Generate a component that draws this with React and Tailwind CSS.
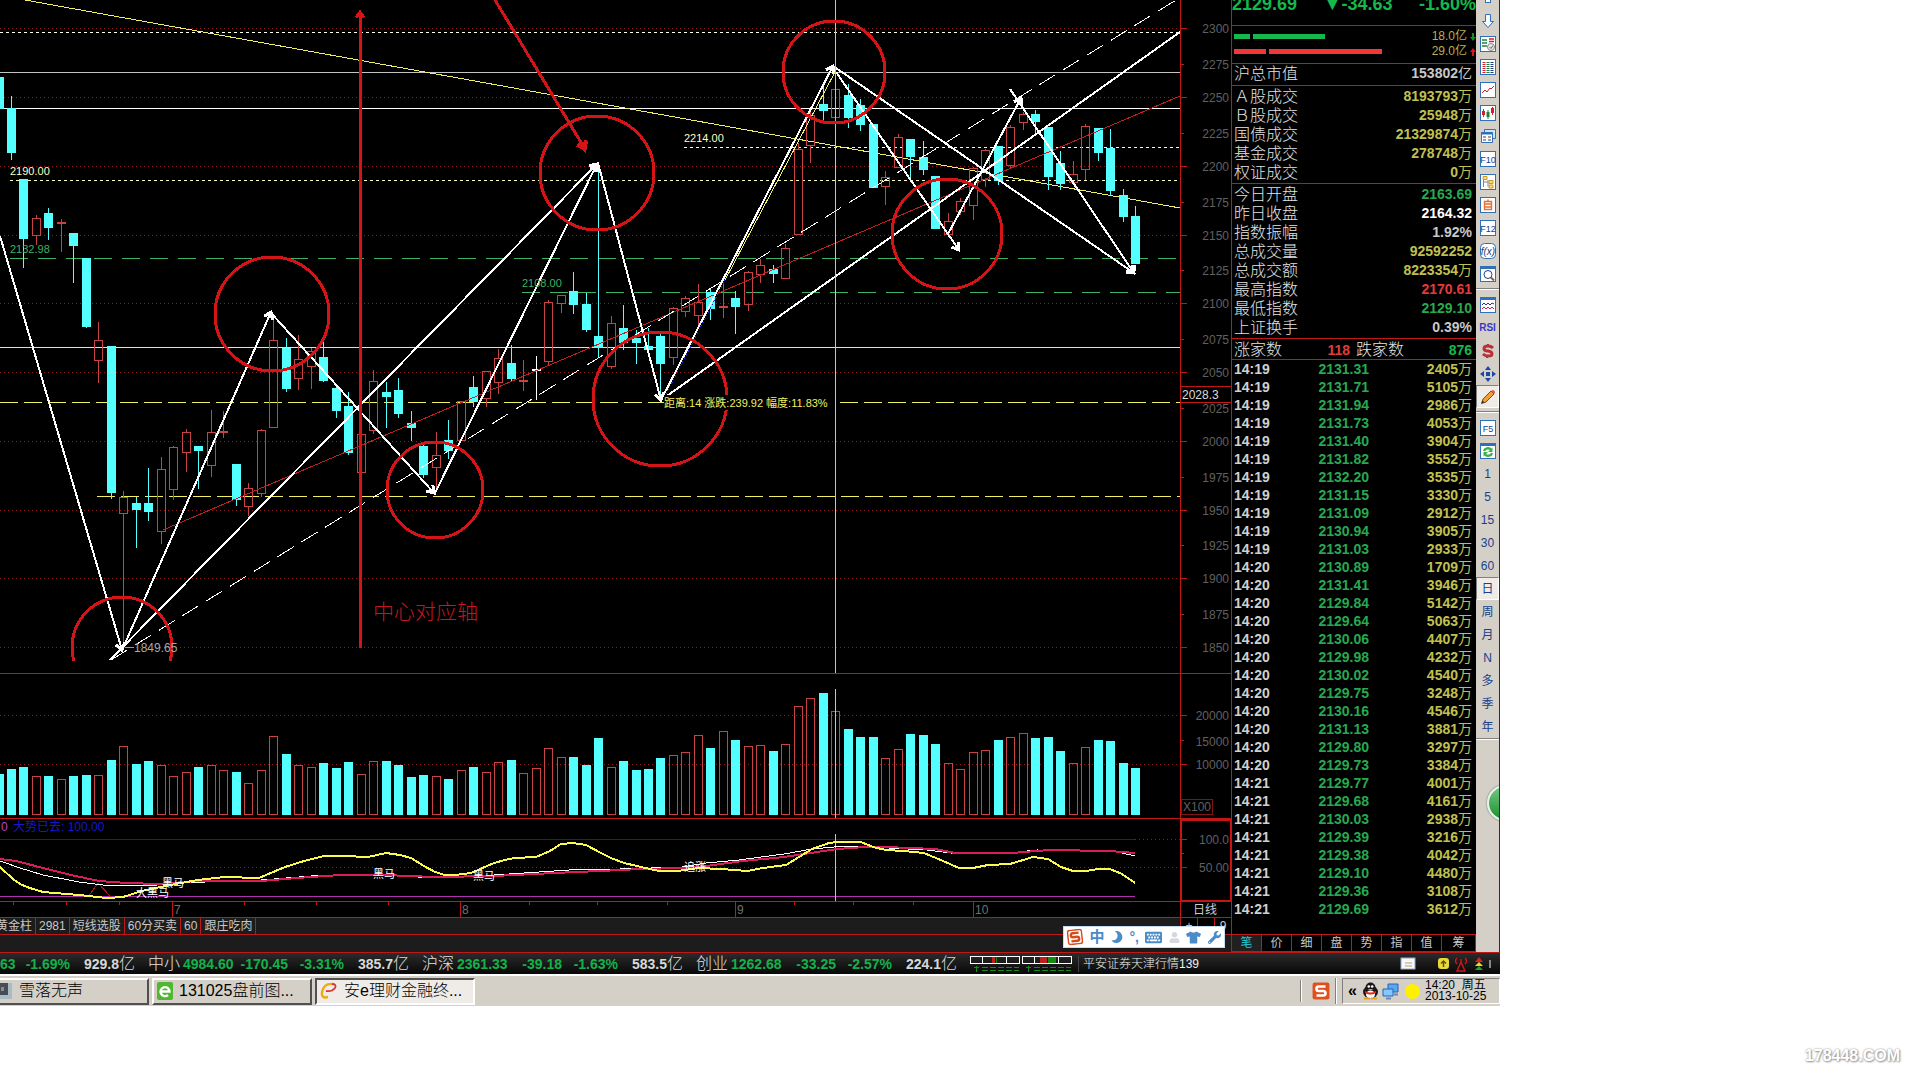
import { clsx } from 'clsx';
import { FaKeyboard, FaMoon, FaTshirt, FaUser, FaWrench } from 'react-icons/fa';

const CHART_W = 1232;
const PLOT_W = 1180;
const STEP = 12.49;
const CYAN = '#54ffff';
const RED = '#c84444';
const FRAME = '#c01818';
const MARK = '#d41416';

const barX = (i) => Math.round(11 + (i - 1) * STEP);

// [direction, high, body top, body bottom, low, volume height]
const candles = [
  ['d', 77, 77, 108, 108, 41], ['d', 96, 108, 152, 160, 46], ['d', 179, 179, 238, 268, 48],
  ['u', 215, 218, 235, 245, 39], ['d', 208, 213, 227, 240, 39], ['u', 219, 222, 223, 252, 36],
  ['d', 233, 233, 245, 283, 39], ['d', 258, 258, 326, 328, 40], ['u', 322, 340, 360, 383, 40],
  ['d', 346, 346, 492, 499, 55], ['u', 491, 497, 513, 645, 69], ['d', 497, 503, 509, 548, 51],
  ['d', 468, 503, 511, 521, 54], ['u', 457, 469, 531, 544, 50], ['u', 446, 447, 489, 500, 39],
  ['u', 429, 432, 452, 472, 43], ['d', 446, 446, 450, 489, 48], ['u', 410, 432, 465, 477, 50],
  ['u', 411, 431, 432, 438, 45], ['d', 464, 464, 499, 506, 43], ['u', 483, 488, 506, 516, 32],
  ['u', 429, 430, 493, 497, 45], ['u', 318, 340, 427, 428, 79], ['d', 338, 348, 388, 392, 61],
  ['u', 335, 359, 378, 390, 50], ['u', 348, 351, 366, 389, 48], ['d', 340, 357, 380, 382, 52],
  ['d', 385, 388, 410, 418, 47], ['d', 392, 406, 452, 455, 53], ['u', 434, 434, 472, 472, 41],
  ['u', 370, 381, 430, 434, 54], ['d', 382, 392, 396, 428, 54], ['d', 378, 390, 413, 418, 50],
  ['d', 411, 423, 427, 441, 38], ['d', 445, 446, 474, 478, 40], ['u', 432, 455, 467, 490, 39],
  ['d', 420, 440, 450, 459, 36], ['u', 401, 401, 440, 440, 45], ['d', 376, 387, 401, 407, 48],
  ['u', 371, 371, 398, 407, 43], ['u', 349, 358, 382, 394, 53], ['d', 345, 363, 378, 381, 55],
  ['u', 360, 380, 381, 391, 42], ['w', 356, 369, 370, 400, 47], ['u', 300, 302, 361, 365, 67],
  ['u', 295, 295, 303, 313, 58], ['d', 272, 291, 304, 314, 58], ['d', 293, 304, 329, 332, 50],
  ['d', 163, 336, 347, 357, 77], ['u', 316, 323, 366, 369, 48], ['d', 305, 328, 342, 350, 54],
  ['d', 330, 338, 342, 364, 45], ['d', 328, 346, 349, 351, 46], ['d', 333, 336, 363, 401, 57],
  ['u', 307, 308, 357, 365, 60], ['u', 296, 298, 311, 317, 63], ['u', 284, 302, 315, 327, 80],
  ['d', 288, 292, 308, 320, 67], ['u', 284, 306, 307, 318, 84], ['d', 291, 298, 306, 334, 75],
  ['u', 271, 272, 304, 311, 69], ['u', 259, 265, 274, 283, 70], ['d', 265, 269, 273, 283, 64],
  ['u', 244, 248, 278, 278, 71], ['u', 143, 149, 234, 235, 109], ['u', 112, 115, 145, 163, 117],
  ['d', 85, 104, 110, 121, 122], ['u', 73, 89, 117, 117, 104], ['d', 84, 95, 117, 128, 86],
  ['d', 99, 105, 124, 131, 78], ['d', 124, 124, 187, 188, 78], ['u', 171, 177, 186, 205, 57],
  ['u', 134, 137, 167, 168, 66], ['d', 139, 139, 156, 181, 81], ['d', 141, 157, 169, 175, 80],
  ['d', 176, 176, 228, 229, 71], ['u', 213, 221, 234, 236, 52], ['u', 198, 201, 211, 215, 46],
  ['u', 167, 168, 205, 220, 63], ['u', 149, 150, 179, 187, 65], ['d', 146, 146, 180, 185, 75],
  ['u', 125, 127, 165, 168, 78], ['u', 112, 114, 122, 130, 82], ['d', 110, 114, 121, 134, 77],
  ['d', 127, 127, 176, 190, 78], ['d', 151, 163, 183, 190, 64], ['u', 161, 174, 182, 184, 52],
  ['u', 124, 126, 169, 180, 68], ['d', 128, 128, 152, 161, 75], ['d', 129, 148, 190, 196, 74],
  ['d', 189, 195, 216, 222, 52], ['d', 206, 216, 263, 263, 47],
];

const priceTicks = [
  [2300, 28], [2275, 64], [2250, 97], [2225, 133], [2200, 166], [2175, 202], [2150, 235],
  [2125, 270], [2100, 303], [2075, 339], [2050, 372], [2025, 408], [2000, 441], [1975, 477],
  [1950, 510], [1925, 545], [1900, 578], [1875, 614], [1850, 647],
];

const levels = [
  { y: 32, x: 0, color: '#fffff0', dash: '3 3' },
  { y: 72, x: 0, color: '#c4c4c4' },
  { y: 108, x: 0, color: '#ffffff' },
  { y: 147, x: 684, color: '#ffffc0', dash: '3 3', label: '2214.00' },
  { y: 180, x: 10, color: '#ffffc0', dash: '3 3', label: '2190.00' },
  { y: 258, x: 10, color: '#3cb464', dash: '18 10', label: '2132.98' },
  { y: 292, x: 522, color: '#3cb464', dash: '18 10', label: '2108.00' },
  { y: 347, x: 0, color: '#f0f060' },
  { y: 402, x: 0, color: '#f0f060', dash: '18 6' },
  { y: 496, x: 97, color: '#f0f060', dash: '18 6' },
];

const swings = [
  [0, 236, 122, 650], [123, 648, 271, 312], [110, 660, 597, 164], [272, 314, 434, 493],
  [435, 493, 597, 164], [598, 163, 661, 400], [661, 400, 833, 66], [836, 68, 1134, 273],
  [836, 72, 959, 250], [948, 234, 1021, 98], [1010, 89, 1134, 273],
];

const circles = [
  [272, 314, 57], [597, 173, 57], [834, 72, 51], [947, 234, 55], [435, 490, 48], [660, 399, 67],
];

const trades = [
  ['14:19', '2131.31', 2405], ['14:19', '2131.71', 5105], ['14:19', '2131.94', 2986],
  ['14:19', '2131.73', 4053], ['14:19', '2131.40', 3904], ['14:19', '2131.82', 3552],
  ['14:19', '2132.20', 3535], ['14:19', '2131.15', 3330], ['14:19', '2131.09', 2912],
  ['14:19', '2130.94', 3905], ['14:19', '2131.03', 2933], ['14:20', '2130.89', 1709],
  ['14:20', '2131.41', 3946], ['14:20', '2129.84', 5142], ['14:20', '2129.64', 5063],
  ['14:20', '2130.06', 4407], ['14:20', '2129.98', 4232], ['14:20', '2130.02', 4540],
  ['14:20', '2129.75', 3248], ['14:20', '2130.16', 4546], ['14:20', '2131.13', 3881],
  ['14:20', '2129.80', 3297], ['14:20', '2129.73', 3384], ['14:21', '2129.77', 4001],
  ['14:21', '2129.68', 4161], ['14:21', '2130.03', 2938], ['14:21', '2129.39', 3216],
  ['14:21', '2129.38', 4042], ['14:21', '2129.10', 4480], ['14:21', '2129.36', 3108],
  ['14:21', '2129.69', 3612],
];

const turnover = [
  ['Ａ股成交', '8193793', '万'], ['Ｂ股成交', '25948', '万'], ['国债成交', '21329874', '万'],
  ['基金成交', '278748', '万'], ['权证成交', '0', '万'],
];

const indexStats = [
  ['今日开盘', '2163.69', '', 'text-[#28a850]'],
  ['昨日收盘', '2164.32', '', 'text-white'],
  ['指数振幅', '1.92%', '', 'text-[#c8c8c8]'],
  ['总成交量', '92592252', '', 'text-[#c0c050]'],
  ['总成交额', '8223354', '万', 'text-[#c0c050]'],
  ['最高指数', '2170.61', '', 'text-[#e03c3c]'],
  ['最低指数', '2129.10', '', 'text-[#28a850]'],
  ['上证换手', '0.39%', '', 'text-[#c8c8c8]'],
];

const quotes = [
  { change: '63', percent: '-1.69%', amount: '929.8' },
  { name: '中小', price: '4984.60', change: '-170.45', percent: '-3.31%', amount: '385.7' },
  { name: '沪深', price: '2361.33', change: '-39.18', percent: '-1.63%', amount: '583.5' },
  { name: '创业', price: '1262.68', change: '-33.25', percent: '-2.57%', amount: '224.1' },
];

function GridRow({ y }) {
  return <line x1="0" x2={PLOT_W} y1={y + 0.5} y2={y + 0.5} stroke="#8c1c1c" strokeDasharray="1 3" />;
}

function Arrow({ x1, y1, x2, y2, width = 2, color = '#fff', head = 8 }) {
  const a = Math.atan2(y2 - y1, x2 - x1);
  const wing = (d) => `${x2 - head * Math.cos(a + d)},${y2 - head * Math.sin(a + d)}`;
  return (
    <g stroke={color} strokeWidth={width} fill="none">
      <line x1={x1} y1={y1} x2={x2} y2={y2} />
      <polyline points={`${wing(0.6)} ${x2},${y2} ${wing(-0.6)}`} strokeWidth={3} />
    </g>
  );
}

function Candle({ i, data }) {
  const [dir, high, top, bottom, low] = data;
  const x = barX(i);
  const color = dir === 'd' ? CYAN : dir === 'w' ? '#fff' : RED;
  const hollow = dir === 'u' && bottom - top > 2;
  return (
    <g>
      <rect x={x} y={high} width="1" height={Math.max(top - high, 0)} fill={color} />
      <rect x={x} y={bottom} width="1" height={Math.max(low - bottom, 0)} fill={color} />
      {hollow ? (
        <rect x={x - 3.5} y={top + 0.5} width="8" height={bottom - top} fill="none" stroke={color} />
      ) : (
        <rect x={x - 4} y={top} width="9" height={bottom - top + 1} fill={color} />
      )}
    </g>
  );
}

function PriceChart() {
  return (
    <svg viewBox={`0 0 ${CHART_W} 673`} className="block w-full h-auto" shapeRendering="crispEdges" fontSize="12">
      {priceTicks.map(([price, y], i) => (
        <g key={price}>
          {i % 2 === 0 && <GridRow y={y} />}
          <line x1="1180" x2={i % 2 ? 1184 : 1187} y1={y + 0.5} y2={y + 0.5} stroke={FRAME} />
          <text x="1229" y={y + 5} fill="#606060" textAnchor="end">{price}</text>
        </g>
      ))}
      {levels.map(({ y, x, color, dash }) => (
        <line key={y} x1={x} x2={PLOT_W} y1={y + 0.5} y2={y + 0.5} stroke={color} strokeDasharray={dash} />
      ))}
      <line x1="25" y1="0" x2="1180" y2="208" stroke="#f0f060" />
      {candles.map((c, i) => <Candle key={i} i={i} data={c} />)}
      <line x1="163" y1="530" x2="1180" y2="96" stroke="#c02020" />
      <line x1="111" y1="660" x2="1176" y2="0" stroke="#fff" strokeDasharray="19 9" />
      <line x1="664" y1="398" x2="1180" y2="32" stroke="#fff" strokeWidth="2" />
      {swings.map(([x1, y1, x2, y2]) => (
        <Arrow key={`${x1}-${x2}`} x1={x1} y1={y1} x2={x2} y2={y2} />
      ))}
      <line x1="725" y1="280" x2="835" y2="72" stroke="#f0f060" />
      <line x1="664" y1="398" x2="725" y2="280" stroke="#2828d0" strokeDasharray="2 2" />
      <line x1="835.5" x2="835.5" y1="0" y2="673" stroke="#c4c4c4" />
      {levels.filter((l) => l.label).map(({ x, y, color, label }) => (
        <text key={label} x={x} y={y - 5} fill={color} fontSize="11">{label}</text>
      ))}
      <g>
        <Arrow x1={360} y1={648} x2={360} y2={12} width={3} color={MARK} head={7} />
        <Arrow x1={495} y1={0} x2={585} y2={149} width={3} color={MARK} head={9} />
        <path d="M576 144L588 141L586 153Z" fill={MARK} />
        {circles.map(([cx, cy, r]) => (
          <circle key={cx} cx={cx} cy={cy} r={r} fill="none" stroke={MARK} strokeWidth="3" />
        ))}
        <path d="M74 661A50 50 0 1 1 170 661" fill="none" stroke={MARK} strokeWidth="3" />
      </g>
      <path d="M125 647.5H134" stroke="#999" />
      <text x="134" y="652" fill="#a8a8a8">1849.65</text>
      <text x="373" y="619" fill="#c01822" fontSize="21" className="font-light">中心对应轴</text>
      <rect x="664" y="395" width="170" height="15" fill="#000" />
      <text x="664" y="407" fill="#f0f060" fontSize="11">距离:14 涨跌:239.92 幅度:11.83%</text>
      <path d="M1180.5 0V673M1231.5 0V673M1180 386.5H1232M1180 402.5H1232" stroke={FRAME} fill="none" />
      <rect x="1181" y="387" width="50" height="15" fill="#000" />
      <text x="1182" y="399" fill="#ddd">2028.3</text>
    </svg>
  );
}

function VolumeChart() {
  return (
    <svg viewBox={`0 673 ${CHART_W} 146`} className="block w-full h-auto" shapeRendering="crispEdges" fontSize="12">
      <GridRow y={715} />
      <GridRow y={764} />
      {candles.map((c, i) => {
        const x = barX(i);
        return c[0] === 'd' ? (
          <rect key={i} x={x - 4} y={815 - c[5]} width="9" height={c[5]} fill={CYAN} />
        ) : (
          <rect key={i} x={x - 3.5} y={815.5 - c[5]} width="8" height={c[5] - 1} fill="none" stroke={RED} />
        );
      })}
      <line x1="835.5" x2="835.5" y1="689" y2="819" stroke="#c4c4c4" />
      <path d="M0 673.5H1232M1180.5 673V819M1231.5 673V819M0 818.5H1232M1180 715.5H1187M1180 740.5H1184M1180 764.5H1187" stroke={FRAME} fill="none" />
      <g fill="#606060" textAnchor="end">
        <text x="1229" y="720">20000</text>
        <text x="1229" y="746">15000</text>
        <text x="1229" y="769">10000</text>
        <text x="1211" y="811">X100</text>
      </g>
      <rect x="1181.5" y="799.5" width="31" height="15" fill="none" stroke="#801414" />
    </svg>
  );
}

function IndicatorChart() {
  return (
    <svg viewBox={`0 819 ${CHART_W} 83`} className="block w-full h-auto" shapeRendering="crispEdges" fontSize="12">
      <GridRow y={867} />
      <line x1="1135" x2="1180" y1="839.5" y2="839.5" stroke="#8c1c1c" strokeDasharray="1 3" />
      <line x1="0" x2="1135" y1="839.5" y2="839.5" stroke="#1818b0" />
      <line x1="0" x2="1135" y1="896.5" y2="896.5" stroke="#b030b0" />
      <line x1="835.5" x2="835.5" y1="834" y2="902" stroke="#c4c4c4" />
      <path d="M88 897L98 883L111 897" fill="none" stroke="#b01818" />
      <polyline
        fill="none" stroke="#fff"
        points="0,861 20,868 43,875 79,882 111,886 158,885 178,883 261,880 324,875 384,875 435,878 494,875 569,870 620,869 682,867 706,863 739,860 784,854 812,849 845,846 869,847 927,850 959,854 1008,853 1037,850 1110,851 1122,853 1135,856"
      />
      <polyline
        fill="none" stroke="#d81e5a" strokeWidth="2"
        points="0,859 16,861 47,869 71,875 99,881 127,883 158,884 198,881 261,881 297,878 340,875 384,875 435,877 494,876 554,873 600,871 641,869 682,868 706,866 743,861 784,857 837,849 865,847 886,847 935,849 955,853 1012,853 1049,850 1110,851 1135,853"
      />
      <polyline
        fill="none" stroke="#fafa50" strokeWidth="2"
        points="0,867 14,880 22,885 30,888 43,892 79,895 107,898 123,897 142,891 170,885 198,880 225,877 259,878 285,867 304,861 324,856 344,856 368,857 386,853 400,855 411,858 424,866 435,872 445,875 455,875 471,873 494,863 505,860 514,858 536,857 550,851 561,844 573,843 586,845 601,853 611,858 624,863 641,867 659,871 678,871 698,868 722,869 747,871 763,868 786,865 799,857 812,849 829,843 837,842 861,842 873,847 886,850 904,851 924,853 943,861 959,868 973,868 988,865 1010,864 1033,857 1048,859 1061,867 1073,871 1086,871 1098,869 1110,869 1122,874 1135,883"
      />
      <g fill="#fff" fontSize="11">
        <text x="162" y="887">黑马</text>
        <text x="136" y="897">大黑马</text>
        <text x="373" y="878">黑马</text>
        <text x="473" y="880">黑马</text>
        <text x="684" y="871">追涨</text>
      </g>
      <text x="1" y="831" fill="#c040c0">0</text>
      <text x="13" y="831" fill="#1818c8">大势已去: 100.00</text>
      <path d="M0 901.5H1180M1180 839.5H1187M1180 853.5H1184M1180 867.5H1187" stroke={FRAME} />
      <rect x="1181" y="820" width="50" height="81" strokeWidth="2" stroke="#c81414" fill="none" />
      <g fill="#606060" textAnchor="end">
        <text x="1229" y="844">100.0</text>
        <text x="1229" y="872">50.00</text>
      </g>
    </svg>
  );
}

function TimeAxis() {
  const minor = [13, 66, 119, 244, 316, 388, 529, 597, 667, 794, 853, 913];
  const months = [[172, 7], [460, 8], [735, 9], [973, 10]];
  return (
    <svg viewBox={`0 902 ${CHART_W} 16`} className="block w-full h-auto" shapeRendering="crispEdges" fontSize="12">
      {minor.map((x) => <line key={x} x1={x + 0.5} x2={x + 0.5} y1="902" y2="905" stroke={FRAME} />)}
      {months.map(([x, label]) => (
        <g key={x}>
          <line x1={x + 0.5} x2={x + 0.5} y1="902" y2="918" stroke={FRAME} />
          <text x={x + 2} y="914" fill="#707070">{label}</text>
        </g>
      ))}
      <path d="M0 917.5H1232M1180.5 902V918M1231.5 902V918" stroke={FRAME} />
      <text x="1205" y="914" fill="#ccc" textAnchor="middle" fontSize="12">日线</text>
    </svg>
  );
}

function StudyTabs() {
  const tabs = ['黄金柱', '2981', '短线选股', '60分买卖', '60', '跟庄吃肉'];
  return (
    <div className="flex h-[17px] border-b border-[#c01818] bg-[#1c1c1c] text-xs text-[#c8c8c8]">
      {tabs.map((tab, i) => (
        <button key={tab} className={clsx('border-r border-[#c01818] leading-4', i === 0 ? '-ml-1 pr-[3px]' : 'px-[3px]')}>
          {tab}
        </button>
      ))}
      <div className="ml-auto grid w-[52px] grid-cols-3 border-l border-[#c01818] bg-black">
        {['+', '-', '9'].map((key) => (
          <button key={key} className="border-r border-[#c01818] leading-4">{key}</button>
        ))}
      </div>
    </div>
  );
}

function ImeBar() {
  return (
    <div className="absolute right-[7px] bottom-1 flex h-[22px] w-[162px] items-center justify-between border border-[#c8dcf0] bg-white px-[3px] text-[#4a8cc8]">
      <SogouIcon size={16} tilt />
      <span className="text-[15px] leading-5 font-bold">中</span>
      <FaMoon size={12} className="-scale-x-100" />
      <span className="text-sm leading-5 font-bold">°,</span>
      <FaKeyboard size={17} />
      <FaUser size={11} className="text-[#d4d8dc]" />
      <FaTshirt size={15} />
      <FaWrench size={13} />
    </div>
  );
}

function SogouIcon({ size, tilt }) {
  return (
    <svg width={size} height={size} viewBox="0 0 16 16" fill="none" className={clsx(tilt && '-rotate-6')}>
      {tilt ? (
        <rect x="1" y="1" width="14" height="14" rx="2" fill="#fff" stroke="#d84c1c" strokeWidth="1.5" />
      ) : (
        <rect x="0.5" y="0.5" width="15" height="15" rx="2" fill="#e0501c" />
      )}
      <path d="M12 4H6Q4 4 4 6T6 8H10Q12 8 12 10T10 12H4" stroke={tilt ? '#d84c1c' : '#fff'} strokeWidth="2.4" />
    </svg>
  );
}

function StatRow({ label, value, unit, color }) {
  return (
    <div className="flex h-[19px] items-center justify-between">
      <dt className="text-base leading-[19px] font-light text-[#e4e4e4]">{label}</dt>
      <dd className={clsx('text-sm leading-[19px] font-bold', color)}>
        {value}<span className="font-normal">{unit}</span>
      </dd>
    </div>
  );
}

function QuotePanel() {
  return (
    <aside className="flex w-[244px] shrink-0 flex-col bg-black">
      <div className="flex h-[26px] justify-between border-b border-[#c01818] text-lg leading-2 font-bold text-[#14b84c]">
        <span>2129.69</span>
        <span>▼-34.63</span>
        <span>-1.60%</span>
      </div>
      <div className="h-[38px] border-b border-[#c01818] pt-[3px] pl-[2px] text-xs leading-[15px] text-[#b8b050]">
        <div className="flex items-center gap-[3px]">
          <i className="h-[5px] w-4 bg-[#14b84c]" />
          <i className="h-[5px] w-[72px] bg-[#14b84c]" />
          <span className="ml-auto">18.0亿</span>
          <svg width="6" height="8" viewBox="0 0 6 8"><path d="M2 0H4V4H6L3 8L0 4H2Z" fill="#148c28" /></svg>
        </div>
        <div className="flex items-center gap-[3px]">
          <i className="h-[5px] w-8 bg-[#f03838]" />
          <i className="h-[5px] w-[113px] bg-[#f03838]" />
          <span className="ml-auto">29.0亿</span>
          <svg width="6" height="8" viewBox="0 0 6 8"><path d="M2 8H4V4H6L3 0L0 4H2Z" fill="#e01414" /></svg>
        </div>
      </div>
      <dl className="h-[22px] border-b border-[#c01818] pr-1 pl-[2px]">
        <StatRow label="沪总市值" value="153802" unit="亿" color="text-[#c8c8c8]" />
      </dl>
      <dl className="h-[98px] border-b border-[#c01818] pt-[1px] pr-1 pl-[2px]">
        {turnover.map(([label, value, unit]) => (
          <StatRow key={label} label={label} value={value} unit={unit} color="text-[#c0c050]" />
        ))}
      </dl>
      <dl className="h-[155px] border-b border-[#c01818] pt-[1px] pr-1 pl-[2px]">
        {indexStats.map(([label, value, unit, color]) => (
          <StatRow key={label} label={label} value={value} unit={unit} color={color} />
        ))}
      </dl>
      <div className="flex h-[21px] items-center border-b border-[#c01818] pt-[2px] pr-1 pl-[2px] text-base leading-5 font-light text-[#e4e4e4]">
        <span>涨家数</span>
        <span className="w-[68px] text-right text-sm font-bold text-[#e03c3c]">118</span>
        <span className="ml-[6px]">跌家数</span>
        <span className="ml-auto text-sm font-bold text-[#14b84c]">876</span>
      </div>
      <table className="w-full text-sm leading-[18px] font-bold">
        <tbody>
          {trades.map(([time, price, lots], i) => (
            <tr key={i} className="h-[18px]">
              <td className="w-[70px] p-0 pl-[2px] text-[#d0d0d0]">{time}</td>
              <td className="w-[67px] p-0 text-right text-[#28a850]">{price}</td>
              <td className="p-0 pr-1 text-right text-[#c0c050]">{lots}<span className="font-normal">万</span></td>
            </tr>
          ))}
        </tbody>
      </table>
      <div className="mt-auto flex h-[18px] border-t border-b border-[#c01818]">
        {['笔', '价', '细', '盘', '势', '指', '值', '筹'].map((tab, i) => (
          <button
            key={tab}
            className={clsx(
              'w-[30px] border-r border-[#c01818] text-xs leading-4 last:flex-1',
              i ? 'text-[#c8c8c8]' : 'bg-[#202020] text-[#20c8d8]',
            )}
          >
            {tab}
          </button>
        ))}
      </div>
    </aside>
  );
}

function ToolFrame({ children, label }) {
  return (
    <svg width="16" height="16" viewBox="0 0 16 16" fill="none">
      <rect x="0.5" y="0.5" width="15" height="15" fill="#fff" stroke="#3070b8" />
      {label && <text x="8" y="12" textAnchor="middle" fontSize="9" fill="#1040a0">{label}</text>}
      {children}
    </svg>
  );
}

const tools = [
  ['下移', <svg width="14" height="16" viewBox="0 0 14 16"><path d="M4.5 1.5H9.5V8.5H12.5L7 14.5L1.5 8.5H4.5Z" fill="#f4faff" stroke="#3070b8" /></svg>],
  ['报价', <ToolFrame><path d="M2 4H7M2 7H7M2 10H7" stroke="#20803c" strokeWidth="1.5" /><path d="M9 3H14M9 5.5H14" stroke="#d02030" strokeWidth="1.5" /><circle cx="11" cy="11" r="3.5" fill="#e8e8e8" stroke="#888" /><path d="M9.5 11L11 12.5L13 9.5" stroke="#606060" /></ToolFrame>],
  ['列表', <ToolFrame><path d="M4 3V14" stroke="#d02030" strokeWidth="3" strokeDasharray="1 1" /><path d="M8 3V14" stroke="#20803c" strokeWidth="3" strokeDasharray="1 1" /><path d="M12 3V14" stroke="#203880" strokeWidth="3" strokeDasharray="1 1" /></ToolFrame>],
  ['分时', <ToolFrame><path d="M2 11L5 8L7 10L10 6L11 7L14 4" stroke="#d02030" /></ToolFrame>],
  ['K线', <ToolFrame><path d="M3.5 4V12M12.5 2V10" stroke="#d02030" /><path d="M8 5V14" stroke="#20803c" /><path d="M2 6H5V10H2ZM11 3H14V8H11Z" fill="#d02030" /><path d="M6.5 7H9.5V12H6.5Z" fill="#20803c" /></ToolFrame>],
  ['窗口', <svg width="16" height="16" viewBox="0 0 16 16"><path d="M4.5 1.5H15.5V10.5H4.5Z" fill="#cfe4f8" stroke="#3070b8" /><path d="M1.5 4.5H12.5V14.5H1.5Z" fill="#fff" stroke="#3070b8" /><path d="M1 5.5H13" stroke="#3070b8" strokeWidth="2" /><path d="M3 9H6M8 9H11M3 12H6M8 12H11" stroke="#404040" /></svg>],
  ['F10', <ToolFrame label="F10" />],
  ['分类', <ToolFrame><path d="M3.5 3V13M3.5 8H8M8 12.5V6" stroke="#888" /><path d="M3 2.5H7V5.5H3ZM9 6.5H13V9.5H9ZM9 11H13V14H9Z" fill="#f8e080" stroke="#d09820" /></ToolFrame>],
  ['自选', <ToolFrame><path d="M4.5 4.5H11.5V12.5H4.5ZM4.5 7H11.5M4.5 10H11.5M8 2.5V4.5" stroke="#e87030" strokeWidth="1.4" /></ToolFrame>],
  ['F12', <ToolFrame label="F12" />],
  ['公式', <svg width="16" height="16" viewBox="0 0 16 16"><rect x="0.5" y="0.5" width="15" height="15" rx="4" fill="#fff" stroke="#3070b8" /><text x="8" y="12" textAnchor="middle" fontSize="10" fontStyle="italic" fill="#204080">f(x)</text></svg>],
  ['查找', <ToolFrame><path d="M1 2H15" stroke="#3070b8" strokeWidth="2" /><circle cx="8" cy="8.5" r="4" stroke="#204080" /><path d="M11 11.5L14 14.5" stroke="#806040" strokeWidth="2" /></ToolFrame>],
  null,
  ['指标', <ToolFrame><path d="M1 2H15" stroke="#3070b8" strokeWidth="2" /><path d="M2 8L4 6L6 8L8 6L10 8L12 6L14 7" stroke="#303080" /><path d="M2 12L4 10L6 12L8 10L10 12L12 10L14 12" stroke="#d02050" /></ToolFrame>],
  ['RSI', <span className="text-[10px] font-bold text-[#3838c8]">RSI</span>],
  ['资金', <svg width="14" height="16" viewBox="0 0 14 16" fill="none"><path d="M12 5Q10 3 7 3Q3 3 3 5.500Q3 8 7 8Q11 8.500 11 11Q11 13 7 13Q4 13 2 11" stroke="#b83038" strokeWidth="3" /><path d="M7 1V3M6 13V15" stroke="#b83038" strokeWidth="2" /></svg>],
  ['移动', <svg width="16" height="16" viewBox="0 0 16 16" fill="#1848a8"><path d="M8 0L11 4H5ZM8 16L11 12H5ZM0 8L4 5V11ZM16 8L12 5V11ZM6 6H10V10H6Z" /></svg>],
  ['画线', <svg width="16" height="16" viewBox="0 0 16 16"><path d="M1.5 14.5L3 10L11 2L14 5L6 13Z" fill="#f0a030" stroke="#80501c" /><path d="M11 2L12.5 1Q15 1 15 4L14 5Z" fill="#e05858" /><path d="M1.5 14.5L2.5 11.5L4.5 13.5Z" fill="#333" /></svg>, true],
  null,
  ['F5', <ToolFrame label="F5" />],
  ['刷新', <ToolFrame><path d="M1 2H15" stroke="#3070b8" strokeWidth="2" /><path d="M4 8A4 3.5 0 0 1 11 6.5M12 10A4 3.5 0 0 1 5 11.5" stroke="#38b048" strokeWidth="2.4" /><path d="M12.5 4.5V9H8ZM3.5 13.5V9H8Z" fill="#38b048" /></ToolFrame>],
  ...['1', '5', '15', '30', '60', '日', '周', '月', 'N', '多', '季', '年'].map((p) => [
    p, <span className="text-xs text-[#18408c]">{p}</span>, p === '日',
  ]),
];

function ToolStrip() {
  return (
    <nav className="relative flex w-6 shrink-0 flex-col overflow-hidden border-r border-[#303030] bg-[#d4d0c8]">
      <div className="flex h-[9px] justify-center">
        <i className="h-[3px] w-[6px] border border-t-0 border-[#3070b8] bg-white" />
      </div>
      {tools.map((tool, i) => tool ? (
        <button
          key={i}
          aria-label={tool[0]}
          className={clsx(
            'flex h-[23px] items-center justify-center',
            tool[2] && 'border border-[#808080] border-r-white border-b-white bg-[#efece8]',
          )}
        >
          {tool[1]}
        </button>
      ) : (
        <div key={i} className="flex h-2 items-center">
          <hr className="w-full border-t border-b border-t-[#808080] border-b-white" />
        </div>
      ))}
      <hr className="border-t border-b border-t-[#808080] border-b-white" />
      <div className="absolute top-[785px] left-[11px] size-9 rounded-full border-2 border-[#e8f4e8] bg-linear-to-b from-[#70c880] to-[#189030] shadow-[0_0_2px_#555]" />
    </nav>
  );
}

function MarketMeter() {
  return (
    <svg width="104" height="20" viewBox="0 0 104 20" shapeRendering="crispEdges" fill="none">
      {[0, 52].map((x) => (
        <g key={x}>
          <rect x={x + (x ? 18 : 22)} y="3" width={x ? 7 : 3} height="6" fill="#c02020" />
          <rect x={x + 26} y="3" width={x ? 8 : 1} height="6" fill="#148c14" />
          <path d={`M${x + 0.5} 2.5H${x + 49.5}V9.5H${x + 0.5}ZM${x + 12.5} 2V9M${x + 36.5} 2V9`} stroke="#fff" />
          <path d={`M${x + 6.5} 18V11M${x + 4} 13.5H${x + 9}M${x + 12} 13.5H${x + 49}M${x + 12} 16.5H${x + 49}`} stroke="#148c14" strokeDasharray="6 2" />
        </g>
      ))}
    </svg>
  );
}

function QuoteTicker() {
  return (
    <div className="flex h-[22px] items-center overflow-hidden border-t border-[#c01818] bg-linear-to-b from-[#2c2c2c] to-[#080808] text-sm leading-5 font-bold whitespace-nowrap text-[#14b04c]">
      {quotes.map((q, i) => (
        <div key={i} className="mr-[13px] flex shrink-0">
          {q.name && <span className="w-[35px] text-base leading-5 font-light text-[#e4e4e4]">{q.name}</span>}
          {q.price && <span className="w-[52px]">{q.price}</span>}
          <span className={clsx('text-right', q.name ? 'w-[53px]' : 'w-[14px]')}>{q.change}</span>
          <span className="w-14 text-right">{q.percent}</span>
          <span className="w-[65px] text-right text-[#d8d8d8]">{q.amount}<span className="text-base leading-5 font-light">亿</span></span>
        </div>
      ))}
      <MarketMeter />
      <span className="ml-1 border-l border-[#444] pl-1 text-xs font-light text-[#f0f0f0]">平安证券天津行情139</span>
      <svg width="90" height="20" viewBox="0 0 90 20" className="mr-[5px] ml-auto" fill="none">
        <rect x="7" y="4" width="14" height="11" fill="#f4f8ff" stroke="#9ab" />
        <path d="M11 9H18M11 12H18" stroke="#c8a040" />
        <rect x="44" y="4" width="11" height="11" rx="3" fill="#e8d838" />
        <path d="M49.5 13V7M47 9.5L49.5 7L52 9.5" stroke="#605010" strokeWidth="1.5" />
        <path d="M67 8L63 17H71ZM63 4Q60 7 63 10M71 4Q74 7 71 10M67 8V5" stroke="#d01818" strokeWidth="1.4" />
        <path d="M85 3L89 8H81Z" fill="#e02020" />
        <path d="M85 8L89 12H81Z" fill="#f0d820" />
        <path d="M85 12L89 16H81Z" fill="#20a030" />
      </svg>
      <i className="mr-[9px] h-2 w-[2px] bg-[#888]" />
    </div>
  );
}

function TaskButton({ icon, active, className, children }) {
  return (
    <button
      className={clsx(
        'flex h-[27px] items-center gap-[6px] border-2 text-base leading-5 font-light text-black',
        active ? 'border-[#505050] border-r-white border-b-white bg-[#efece8]' : 'border-white border-r-[#505050] border-b-[#505050]',
        className,
      )}
    >
      {icon}
      {children}
    </button>
  );
}

function Taskbar() {
  return (
    <footer className="flex h-8 items-center gap-[3px] border-t-2 border-white bg-[#d4d0c8]">
      <TaskButton
        className="w-[149px] border-l-0"
        icon={<svg width="13" height="16" viewBox="0 0 13 16"><path d="M0 0H12V16H0Z" fill="#a8bcc8" /><path d="M0 0H8V12H0Z" fill="#484c54" /><path d="M1 4H4V8H1Z" fill="#8c8c90" /></svg>}
      >
        雪落无声
      </TaskButton>
      <TaskButton
        className="w-40 pl-[3px]"
        icon={<svg width="16" height="18" viewBox="0 0 16 18" fill="none"><rect width="16" height="18" rx="2" fill="#50b830" /><path d="M3.5 9.5H12.5A4.5 4.5 0 1 0 11 13" stroke="#fff" strokeWidth="2.4" /></svg>}
      >
        131025盘前图...
      </TaskButton>
      <TaskButton
        active
        className="w-40 gap-1 pl-[3px]"
        icon={<svg width="18" height="20" viewBox="0 0 18 20" fill="none"><path d="M13 3Q4 2 2 11Q1 18 8 16" stroke="#f0a818" strokeWidth="2.4" /><path d="M6 10Q12 11 15 7Q17 3 12 3" stroke="#d83838" strokeWidth="1.8" /></svg>}
      >
        安e理财金融终...
      </TaskButton>
      <div className="ml-auto flex items-center">
        <i className="mr-[10px] h-[22px] w-[2px] border-r border-white bg-[#808080]" />
        <SogouIcon size={18} />
        <i className="mx-[5px] h-[26px] w-[2px] border-r border-white bg-[#808080]" />
        <div className="flex h-[26px] w-[158px] items-center border border-[#808080] border-r-white border-b-white pl-[5px] text-black">
          <span className="w-[14px] text-base leading-4 font-bold">«</span>
          <svg width="17" height="18" viewBox="0 0 17 18">
            <ellipse cx="8.5" cy="10" rx="7.5" ry="6.5" fill="#18181c" />
            <circle cx="8.5" cy="5.5" r="5" fill="#18181c" />
            <ellipse cx="8.5" cy="12.5" rx="4.5" ry="4" fill="#fff" />
            <path d="M3 9Q8.5 12 14 9L14 11Q8.5 14 3 11Z" fill="#e02818" />
            <circle cx="6.8" cy="4.5" r="1.3" fill="#fff" />
            <circle cx="10.2" cy="4.5" r="1.3" fill="#fff" />
            <path d="M5.5 7H11.5L8.5 8.5Z" fill="#f0a018" />
            <path d="M2 16.5H8M9 16.5H15" stroke="#f0a018" strokeWidth="2" />
          </svg>
          <svg width="17" height="17" viewBox="0 0 17 17" className="ml-[3px]">
            <path d="M6 1H16V9H6Z" fill="#58a8f0" stroke="#2860b8" />
            <path d="M1 6H11V13H1Z" fill="#80c8ff" stroke="#2860b8" />
            <path d="M4 15.5H9M12 11.5H16" stroke="#6888b0" strokeWidth="2" />
          </svg>
          <i className="mr-[5px] ml-[6px] size-[15px] rounded-full bg-[#fff000]" />
          <div className="text-xs leading-[11px] whitespace-nowrap">
            <p>14:20&nbsp; 周五</p>
            <p>2013-10-25</p>
          </div>
        </div>
      </div>
    </footer>
  );
}

export default function App() {
  return (
    <div className="flex min-h-screen flex-col bg-white font-['Liberation_Sans','Noto_Sans_CJK_SC',sans-serif]">
      <div className="w-25/32 overflow-hidden">
        <div className="flex bg-black">
          <main className="relative flex min-w-0 flex-1 flex-col bg-black">
            <PriceChart />
            <VolumeChart />
            <IndicatorChart />
            <TimeAxis />
            <StudyTabs />
            <div className="min-h-[17px] flex-1 border-r border-[#c01818] bg-[#1c1c1c]" />
            <ImeBar />
          </main>
          <QuotePanel />
          <ToolStrip />
        </div>
        <QuoteTicker />
        <Taskbar />
      </div>
      <p className="mt-auto mr-5 mb-3 self-end text-base leading-6 font-bold text-white [text-shadow:0_0_2px_#888,1px_1px_2px_#999]">
        178448.COM
      </p>
    </div>
  );
}
